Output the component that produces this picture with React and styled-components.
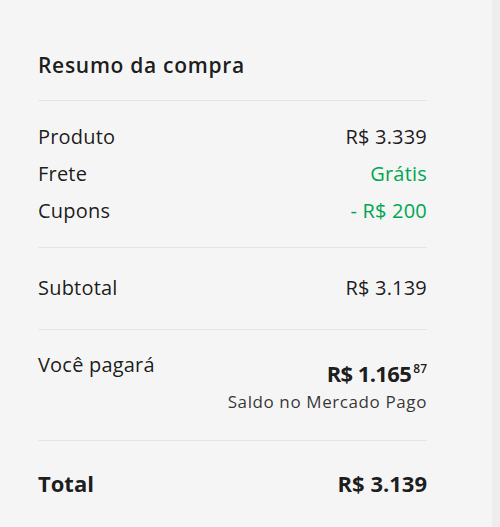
import React from 'react';
import styled, { createGlobalStyle } from 'styled-components';

const GlobalStyle = createGlobalStyle`
  html, body {
    margin: 0;
    padding: 0;
    background: #ededed;
  }
  body {
    font-family: "Open Sans", "Noto Sans", "Liberation Sans", sans-serif;
    color: rgba(0, 0, 0, 0.9);
  }
`;

const Page = styled.div`
  display: flex;
  height: 527px;
`;

const Panel = styled.aside`
  width: 389px;
  padding: 53px 65px 0 38px;
  background: #f5f5f5;
`;

const Strip = styled.div`
  flex: 1;
  background: #ededed;
`;

const Title = styled.h2`
  margin: 0;
  padding-bottom: 23px;
  font-size: 21px;
  line-height: 24px;
  font-weight: 600;
  letter-spacing: 0.7px;
`;

const Section = styled.section`
  border-top: 1px solid #e5e5e5;
  padding: ${(p) => p.$pad || '25px 0 25px'};
  display: flex;
  flex-direction: column;
  gap: 15px;
`;

const Row = styled.div`
  display: flex;
  justify-content: space-between;
  align-items: ${(p) => (p.$top ? 'flex-start' : 'center')};
  font-size: ${(p) => (p.$strong ? '22px' : '20px')};
  font-weight: ${(p) => (p.$strong ? 700 : 400)};
  line-height: ${(p) => (p.$strong ? '24px' : '22px')};
  letter-spacing: ${(p) => (p.$strong ? '0' : '0.2px')};
`;

const Value = styled.span`
  color: ${(p) => (p.$green ? '#00a650' : 'inherit')};
`;

const PayBox = styled.div`
  display: flex;
  flex-direction: column;
  align-items: flex-end;
  margin-top: 7px;
`;

const Amount = styled.span`
  font-size: 22px;
  font-weight: 700;
  line-height: 24px;
  letter-spacing: -0.6px;
`;

const Cents = styled.sup`
  font-size: 12px;
  font-weight: 600;
  margin-left: 2px;
  vertical-align: 9px;
  line-height: 0;
  letter-spacing: 0;
`;

const Note = styled.span`
  margin-top: 7px;
  font-size: 17px;
  line-height: 20px;
  letter-spacing: 0.6px;
  color: rgba(0, 0, 0, 0.8);
`;

export default function App() {
  return (
    <Page>
      <GlobalStyle />
      <Panel>
        <Title>Resumo da compra</Title>
        <Section>
          <Row>
            <span>Produto</span>
            <Value>R$ 3.339</Value>
          </Row>
          <Row>
            <span>Frete</span>
            <Value $green>Grátis</Value>
          </Row>
          <Row>
            <span>Cupons</span>
            <Value $green>- R$ 200</Value>
          </Row>
        </Section>
        <Section $pad="29px 0 30px">
          <Row>
            <span>Subtotal</span>
            <Value>R$ 3.139</Value>
          </Row>
        </Section>
        <Section $pad="24px 0 28px">
          <Row $top>
            <span>Você pagará</span>
            <PayBox>
              <Amount>
                R$ 1.165<Cents>87</Cents>
              </Amount>
              <Note>Saldo no Mercado Pago</Note>
            </PayBox>
          </Row>
        </Section>
        <Section $pad="30px 0 0">
          <Row $strong>
            <span>Total</span>
            <Value>R$ 3.139</Value>
          </Row>
        </Section>
      </Panel>
      <Strip />
    </Page>
  );
}
